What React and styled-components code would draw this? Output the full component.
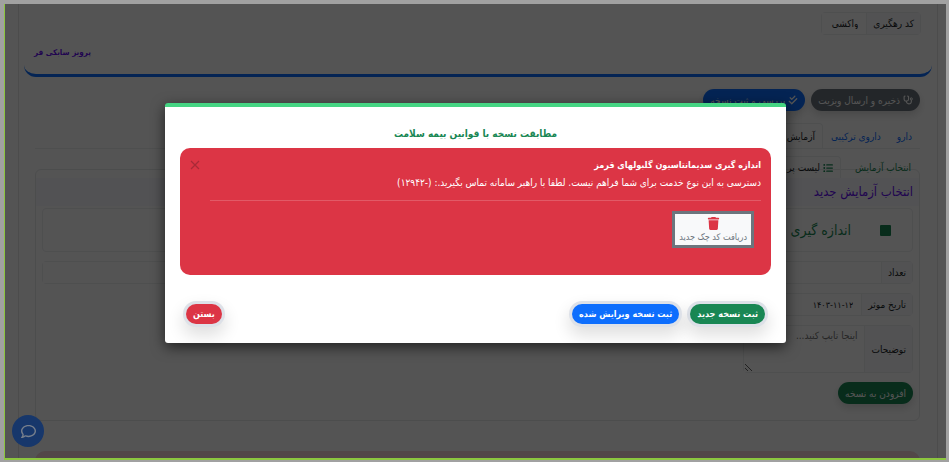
import styled, { createGlobalStyle } from 'styled-components'
import { FaStethoscope, FaCheckDouble, FaListUl, FaTrash, FaRegComment } from 'react-icons/fa6'

const GlobalStyle = createGlobalStyle`
* {
    box-sizing: border-box;
}

body {
    margin: 0;
    background: #a1a1a1;
    font-family: "DejaVu Sans Condensed", "DejaVu Sans", sans-serif;
    font-size: 10px;
    color: #212529;
}

button, input, textarea {
    font-family: inherit;
    font-size: inherit;
}
`

const Frame = styled.div`
height: 100vh;
padding: 4px 3px 2px 4px;
`

const Screen = styled.div`
position: relative;
height: 100%;
overflow: hidden;
background: #fff;
border-left: 1px solid #8cc63f;
border-bottom: 2px solid #8cc63f;
`

const Page = styled.main`
margin: 0 8px 0 13px;
padding: 0 5px;
border: 1px solid #e6e6e6;
border-width: 0 1px;
`

const PatientCard = styled.section`
display: flex;
flex-direction: column;
height: 73px;
padding: 8px 11px 0 10px;
border-bottom: 3px solid #0d6efd;
border-radius: 0 0 12px 12px;
`

const Doctor = styled.strong`
align-self: flex-end;
margin-top: 10px;
font-size: 8px;
line-height: 16px;
color: #6610f2;
`

const Body = styled.div`
padding: 12px 12px 0 11px;
`

const ButtonRow = styled.div`
display: flex;
gap: 6px;
`

const Button = styled.button`
display: flex;
align-items: center;
justify-content: center;
gap: 3px;
height: 22px;
padding: 0 7px;
border: 0;
border-radius: 11px;
background: ${({ color }) => color};
color: #fff;
white-space: nowrap;
box-shadow: 0 4px 8px rgba(0, 0, 0, .15);
`

const DialogButton = styled(Button)`
height: 20px;
font-size: 9px;
font-weight: 700;
box-shadow: 0 0 0 3px #dde1e8, 0 8px 16px 4px rgba(0, 0, 0, .12);
`

const Tabs = styled.nav`
display: flex;
height: 26px;
margin-top: 12px;
border-bottom: 1px solid #eceef0;
`

const Tab = styled.a`
display: flex;
align-items: center;
gap: 3px;
height: 100%;
padding: 0 7px;
border: 1px solid ${({ $active }) => ($active ? '#eceef0' : 'transparent')};
border-bottom: 0;
border-radius: 4px 4px 0 0;
color: ${({ color }) => color || '#0d6efd'};
white-space: nowrap;
text-decoration: none;
`

const Panel = styled.section`
margin-top: 20px;
padding-bottom: 16px;
border: 1px solid #e6e8ea;
border-radius: 6px;
`

const PanelTabs = styled.nav`
display: flex;
gap: 6px;
height: 22px;
margin-top: -14px;
`

const PanelHead = styled.h2`
margin: 0;
padding: 0 6px;
background: #f8f9ff;
color: #6610f2;
font-size: 13px;
font-weight: 400;
line-height: 28px;
`

const Choice = styled.label`
display: flex;
align-items: center;
gap: 29px;
height: 44px;
margin: 2px 6px 0;
padding: 0 21px;
overflow: hidden;
border: 1px solid #eceef0;
border-radius: 4px;
color: #198754;
font-size: 14px;
white-space: nowrap;
`

const Check = styled.input`
appearance: none;
width: 11px;
height: 11px;
margin: 0;
border-radius: 1px;
background: #198754;
`

const Group = styled.div`
display: flex;
width: ${({ $width }) => $width || 'auto'};
height: ${({ $tall }) => ($tall ? '48px' : '23px')};
margin: ${({ $flush }) => ($flush ? 0 : '9px 6px 0')};
border: 1px solid #eceef0;
border-radius: 4px;
`

const GroupLabel = styled.label`
display: flex;
align-items: center;
padding: 0 6px;
background: #f8f9fa;
white-space: nowrap;
`

const Field = styled.input`
flex: 1;
min-width: 0;
padding: 0 8px;
border: 0;
border-right: 1px solid #eceef0;
background: #fff;
color: inherit;
text-align: right;
`

const DateField = styled(Field)`
font-size: 9px;
`

const Notes = styled.textarea`
flex: 1;
min-width: 0;
padding: 4px 7px;
border: 0;
border-right: 1px solid #eceef0;
`

const AddRow = styled.div`
padding: 9px 6px 0;
`

const Warning = styled.div`
height: 20px;
margin-top: 30px;
border-radius: 10px;
background: #f8d7da;
`

const Backdrop = styled.div`
position: absolute;
inset: 0;
display: flex;
align-items: flex-start;
justify-content: center;
padding-top: 99px;
background: rgba(0, 0, 0, .67);
`

const Chat = styled.button`
position: absolute;
left: 7px;
bottom: 11px;
display: flex;
align-items: center;
justify-content: center;
width: 32px;
height: 32px;
padding: 0;
border: 0;
border-radius: 50%;
background: #17376b;
color: #777f8c;
font-size: 15px;
`

const Modal = styled.div`
width: 66%;
padding: 15px;
border-top: 4px solid #45d483;
border-radius: 3px;
background: #fff;
box-shadow: 0 4px 14px rgba(0, 0, 0, .6);
`

const Title = styled.h1`
margin: 0 0 3px;
color: #198754;
font-size: 10px;
line-height: 23px;
text-align: center;
`

const Alert = styled.div`
position: relative;
height: 127px;
padding: 8px 10px 0 30px;
border-radius: 10px;
background: #dc3545;
color: #fff;

h2 {
    margin: 0;
    font-size: 9px;
    line-height: 18px;
}

p {
    margin: 0;
    line-height: 18px;
}

hr {
    margin: 8px 0 10px;
    border: 0;
    border-top: 1px solid #e25a67;
}
`

const Close = styled.button`
position: absolute;
top: 12px;
left: 10px;
padding: 0;
border: 0;
background: none;
line-height: 0;
`

const CodeButton = styled.button`
display: flex;
flex-direction: column;
align-items: center;
justify-content: center;
gap: 2px;
height: 37px;
margin-right: 7px;
padding: 0 4px;
border: 3px solid #6c757d;
background: #f8f9fa;
color: #6c757d;
font-size: 9px;
white-space: nowrap;

svg {
    color: #dc3545;
    font-size: 13px;
}
`

const Footer = styled.footer`
display: flex;
gap: 11px;
padding: 29px 6px 4px;

button:last-child {
    margin-right: auto;
}
`

export default function App() {
    return (
        <Frame dir="rtl">
            <GlobalStyle />
            <Screen>
                <Page>
                    <PatientCard>
                        <Group $width="100px" $flush>
                            <GroupLabel htmlFor="tracking">کد رهگیری</GroupLabel>
                            <Field id="tracking" defaultValue="واکشی" />
                        </Group>
                        <Doctor>پرویز سابکی فر</Doctor>
                    </PatientCard>
                    <Body>
                        <ButtonRow>
                            <Button color="#6c757d"><FaStethoscope /> ذخیره و ارسال ویزیت</Button>
                            <Button color="#0d6efd"><FaCheckDouble /> بررسی و ثبت نسخه</Button>
                        </ButtonRow>
                        <Tabs>
                            <Tab href="#drug">دارو</Tab>
                            <Tab href="#compound">داروی ترکیبی</Tab>
                            <Tab href="#lab" color="#212529" $active>آزمایش</Tab>
                        </Tabs>
                        <Panel>
                            <PanelTabs>
                                <Tab href="#select" color="#198754">انتخاب آزمایش</Tab>
                                <Tab href="#common" color="#212529" $active><FaListUl color="#198754" /> لیست پر کاربرد</Tab>
                            </PanelTabs>
                            <PanelHead>انتخاب آزمایش جدید</PanelHead>
                            <Choice>
                                <Check type="checkbox" defaultChecked />
                                اندازه گیری سدیمانتاسیون گلبولهای قرمز
                            </Choice>
                            <Group>
                                <GroupLabel htmlFor="count">تعداد</GroupLabel>
                                <Field id="count" />
                            </Group>
                            <Group $width="170px">
                                <GroupLabel htmlFor="date">تاریخ موثر</GroupLabel>
                                <DateField id="date" dir="ltr" defaultValue="۱۴۰۳-۱۱-۱۲" />
                            </Group>
                            <Group $width="170px" $tall>
                                <GroupLabel htmlFor="notes">توضیحات</GroupLabel>
                                <Notes id="notes" placeholder="اینجا تایپ کنید..." />
                            </Group>
                            <AddRow>
                                <Button color="#198754">افزودن به نسخه</Button>
                            </AddRow>
                        </Panel>
                        <Warning />
                    </Body>
                </Page>
                <Backdrop>
                    <Modal role="dialog" aria-labelledby="modal-title">
                        <Title id="modal-title">مطابقت نسخه با قوانین بیمه سلامت</Title>
                        <Alert>
                            <Close aria-label="بستن">
                                <svg width="10" height="10" viewBox="0 0 10 10" stroke="#a82a38" strokeWidth="1.2">
                                    <path d="M1 1l8 8M9 1L1 9" />
                                </svg>
                            </Close>
                            <h2>اندازه گیری سدیمانتاسیون گلبولهای قرمز</h2>
                            <p>دسترسی به این نوع خدمت برای شما فراهم نیست. لطفا با راهبر سامانه تماس بگیرید.: (-۱۲۹۴۲)</p>
                            <hr />
                            <CodeButton><FaTrash /> دریافت کد چک جدید</CodeButton>
                        </Alert>
                        <Footer>
                            <DialogButton color="#198754">ثبت نسخه جدید</DialogButton>
                            <DialogButton color="#0d6efd">ثبت نسخه ویرایش شده</DialogButton>
                            <DialogButton color="#dc3545">بستن</DialogButton>
                        </Footer>
                    </Modal>
                </Backdrop>
                <Chat aria-label="گفتگو"><FaRegComment /></Chat>
            </Screen>
        </Frame>
    )
}
